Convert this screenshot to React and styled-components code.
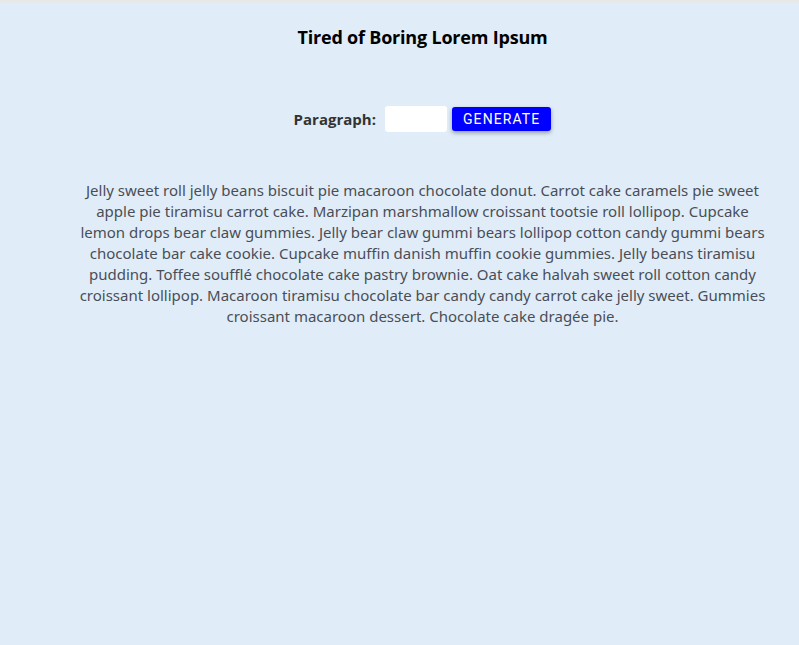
import React, { useState } from 'react';
import styled, { createGlobalStyle } from 'styled-components';

const GlobalStyle = createGlobalStyle`
  html, body {
    margin: 0;
    padding: 0;
    height: 100%;
  }
  body {
    background: #e0edf8;
    font-family: "Open Sans", "Noto Sans", sans-serif;
  }
  #root {
    min-height: 100%;
  }
`;

const Page = styled.div`
  min-height: 645px;
  box-sizing: border-box;
  border-top: 3px solid #e6e8ea;
  background: #e0edf8;
  padding: 0 0 0 46px;
  display: flex;
  flex-direction: column;
  align-items: center;
`;

const Title = styled.h3`
  margin: 22px 0 0;
  font-size: 18px;
  font-weight: 700;
  color: #000;
  font-family: "Open Sans", sans-serif;
  letter-spacing: -0.2px;
`;

const Form = styled.form`
  display: flex;
  align-items: center;
  margin-top: 57px;
`;

const Label = styled.label`
  font-size: 15px;
  font-weight: 700;
  color: #333;
  margin-right: 9px;
  font-family: "Open Sans", sans-serif;
`;

const Input = styled.input`
  width: 62px;
  height: 26px;
  box-sizing: border-box;
  border: none;
  border-radius: 3px;
  background: #fff;
  padding: 0 4px;
  margin-right: 5px;
  &:focus { outline: none; }
`;

const Button = styled.button`
  height: 24px;
  padding: 0 11px;
  background: #0000ff;
  color: #fff;
  border: none;
  border-radius: 3px;
  font-family: Roboto, sans-serif;
  font-size: 14px;
  letter-spacing: 1.1px;
  text-transform: uppercase;
  box-shadow: 0 2px 4px rgba(0, 0, 0, 0.35);
  cursor: pointer;
`;

const Text = styled.p`
  max-width: 700px;
  margin: 48px 0 0;
  text-align: center;
  font-size: 15px;
  line-height: 21px;
  color: #4a4d57;
  font-family: "Noto Sans", sans-serif;
`;

const lorem =
  'Jelly sweet roll jelly beans biscuit pie macaroon chocolate donut. Carrot cake caramels pie sweet apple pie tiramisu carrot cake. Marzipan marshmallow croissant tootsie roll lollipop. Cupcake lemon drops bear claw gummies. Jelly bear claw gummi bears lollipop cotton candy gummi bears chocolate bar cake cookie. Cupcake muffin danish muffin cookie gummies. Jelly beans tiramisu pudding. Toffee soufflé chocolate cake pastry brownie. Oat cake halvah sweet roll cotton candy croissant lollipop. Macaroon tiramisu chocolate bar candy candy carrot cake jelly sweet. Gummies croissant macaroon dessert. Chocolate cake dragée pie.';

export default function App() {
  const [count, setCount] = useState('');

  return (
    <>
      <GlobalStyle />
      <Page>
        <Title>Tired of Boring Lorem Ipsum</Title>
        <Form onSubmit={(e) => e.preventDefault()}>
          <Label htmlFor="amount">Paragraph:</Label>
          <Input
            id="amount"
            type="number"
            value={count}
            onChange={(e) => setCount(e.target.value)}
          />
          <Button type="submit">Generate</Button>
        </Form>
        <Text>{lorem}</Text>
      </Page>
    </>
  );
}
